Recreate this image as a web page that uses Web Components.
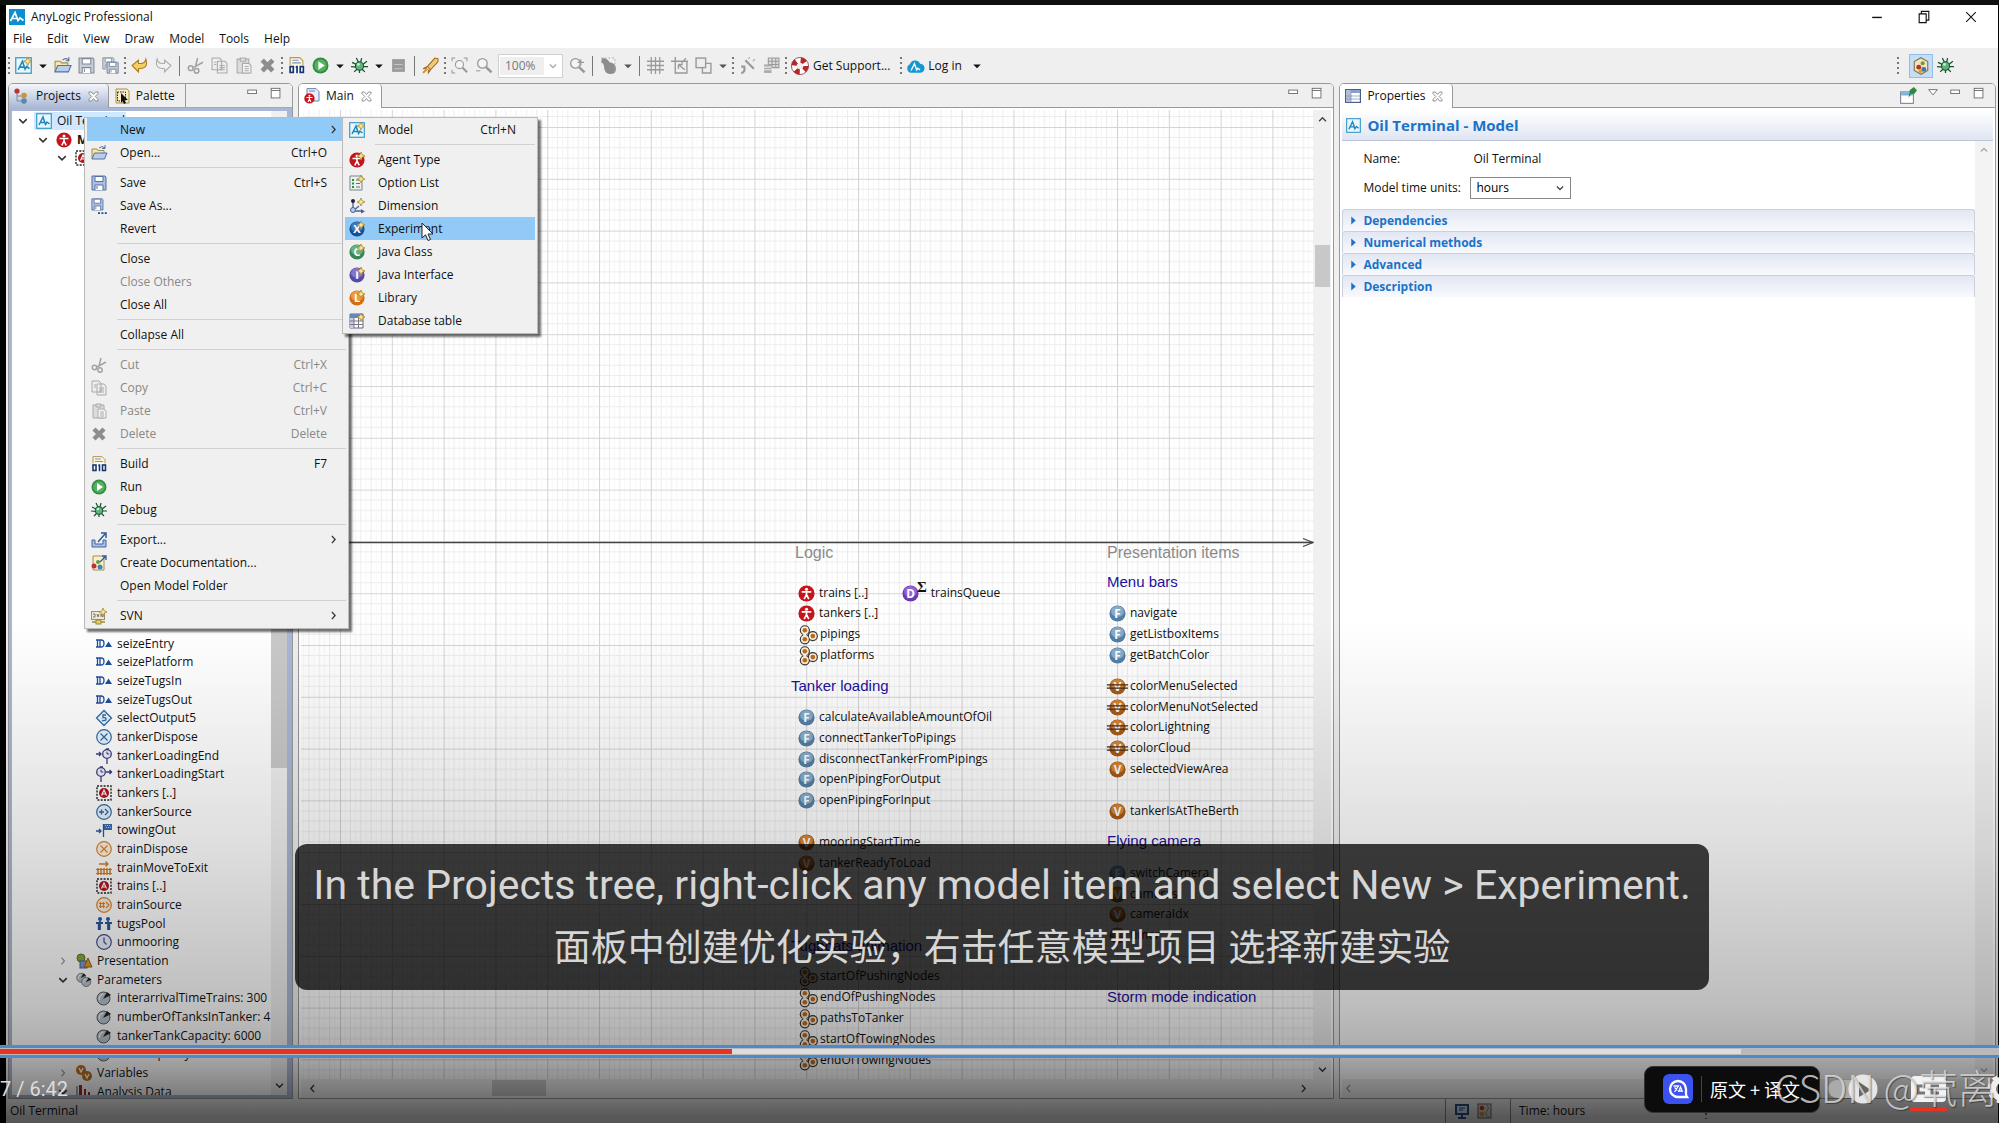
<!DOCTYPE html>
<html lang="en">
<head>
<meta charset="utf-8">
<title>AnyLogic Professional</title>
<style>
html,body{margin:0;height:100%;background:#0f0f0f;overflow:hidden}
body{font:12px/18px "Open Sans","Noto Sans",sans-serif;color:#111}
</style>
</head>
<body>
<video-player></video-player>
<script>
const ball=(a,b,t,x='')=>`<circle cx="8" cy="8" r="7.6" fill="${b}"/><ellipse cx="8" cy="6" rx="6" ry="5" fill="${a}"/><text x="8" y="12" text-anchor="middle" font-family="Open Sans" font-weight="700" font-size="11" fill="#fff">${t}</text>${x}`;
const star=`<path d="M12 0l1.2 2.8L16 4l-2.8 1.2L12 8l-1.200-2.800L8 4l2.800-1.200z" fill="#f8e69a" stroke="#a8862a" stroke-width=".8"/>`;
const logo=`<rect x=".7" y=".7" width="14.600" height="14.600" fill="#e9f6fc" stroke="#3a9bc9" stroke-width="1.200"/><path d="M3 12L7 4l2.500 7.500L11 9l2.500 2M4.500 9.500h4" fill="none" stroke="#1d87bd" stroke-width="1.500"/>`;
const man=`<circle cx="8" cy="8" r="7.600" fill="#c3151b"/><circle cx="8" cy="4" r="1.500" fill="#fff"/><path d="M3.500 6.500h9M8 6v4M8 9l-2.200 4.300M8 9l2.200 4.300" stroke="#fff" stroke-width="1.600" fill="none"/>`;
const bug=`<g stroke="#14532f" stroke-width="1.200" fill="none"><path d="M1 5l4 2M0 9l5 .5M3 14l3-3M5 1l2 4M10 1l-1 4M15 4l-4 3M16 9l-5 0M13 14l-3-3M8 15v-3"/></g><ellipse cx="8" cy="8.500" rx="3.800" ry="4" fill="#5fb27c" stroke="#14532f"/><circle cx="7" cy="7" r="1.300" fill="#c9efcf"/>`;
const floppy=(c,f)=>`<path d="M1 1h13l1 1v13H1z" fill="${f}" stroke="${c}"/><path d="M4 1.500h8v5H4z" fill="#fff" stroke="${c}"/><path d="M4 15v-5h8v5M6 11v3" fill="#fff" stroke="${c}"/>`;
const lens=`<circle cx="7" cy="6" r="4.500" fill="#f4f4f4" stroke="#999" stroke-width="1.200"/><path d="M10.500 9.500l5 5" stroke="#999" stroke-width="2.400"/>`;
const knob=`<circle cx="7.500" cy="8.500" r="6.500" fill="#b9c3cc" stroke="#555d66"/><path d="M3.500 10a5 5 0 0 1 4-6" stroke="#eef2f5" stroke-width="1.500" fill="none"/><path d="M7 9l4-7 4 3z" fill="#222"/>`;
const clock=(x,y,r)=>`<circle cx="${x}" cy="${y}" r="${r}" fill="#eef1fb" stroke="#3c3f80" stroke-width="1.300"/><path d="M${x} ${y-r+2}v${r-2}h${r-2}" stroke="#3c3f80" fill="none"/>`;
const nodes=`<g fill="#333"><circle cx="5.500" cy="4" r="4.800"/><circle cx="5.500" cy="12.500" r="4.800"/><circle cx="13" cy="9.500" r="4.800"/></g><g fill="#f8efdf"><circle cx="5.500" cy="4" r="3.700"/><circle cx="5.500" cy="12.500" r="3.700"/><circle cx="13" cy="9.500" r="3.700"/><path d="M4 6h3v5H4z"/></g><g fill="#c06a17"><circle cx="5.500" cy="4" r="2.200"/><circle cx="5.500" cy="12.500" r="2.200"/><circle cx="13" cy="9.500" r="2.200"/></g>`;
const seize=`<path d="M0 4h5M0 11h5M1.500 4v7M4 4v7M5 4q3 0 3 3.500T5 11" stroke="#1e4f9c" stroke-width="1.300" fill="none"/><path d="M9 11l3.500-5.500L16 11z" fill="#1e4f9c"/>`;
const agentRef=`<rect x="1" y="1" width="14" height="14" fill="#fff" stroke="#222" stroke-width="1.400" stroke-dasharray="2 1.300"/><circle cx="8" cy="8" r="5" fill="#b3131a"/><path d="M5.500 10.500L8 5l2.500 5.500M6.500 9h3" stroke="#fff" fill="none" stroke-width="1.200"/>`;
const I={
logo,
title:`<rect width="16" height="16" fill="#0d8fcf"/><path d="M1.500 12L6 3.500l3 8L11 9l3.500 2.500M3.500 9.500h5" fill="none" stroke="#fff" stroke-width="1.700"/>`,
newmodel:logo+star,
open:`<path d="M1 14V4h5l1 1.500h6V8" fill="#f7e7a8" stroke="#9a8a52"/><path d="M1 14l2.500-6H16l-2.500 6z" fill="#b9cdec" stroke="#54709f"/><path d="M8 3q3-3 6 0M14 0v3.500h-3" stroke="#54709f" fill="none"/>`,
save:floppy('#54709f','#a9c0e2'),
saveg:floppy('#7f8a99','#c9ced6'),
saveall:`<g transform="scale(.75)">${floppy('#7f8a99','#ced3da')}</g><g transform="translate(4 4) scale(.75)">${floppy('#6b7a94','#c3cad6')}</g>`,
saveas:`<g transform="scale(.8)">${floppy('#54709f','#a9c0e2')}</g><path d="M7 15.200h9" stroke="#234a8f" stroke-width="1.800" stroke-dasharray="2 1.400"/>`,
undo:`<path d="M1 8l6-5v3q6 1 7-4 3 9-7 9v3z" fill="#f6cf62" stroke="#a9791c"/>`,
redo:`<path d="M15 8L9 3v3Q3 7 2 2q-3 9 7 9v3z" fill="#f0f0f0" stroke="#aaa"/>`,
cut:`<g fill="none" stroke="#a3a3a3" stroke-width="1.500"><path d="M10 1L8 9M15 5L6 10"/><circle cx="3.500" cy="10.500" r="2.200"/><circle cx="9" cy="13" r="2.200"/></g>`,
copy:`<g fill="#eee" stroke="#aaa"><path d="M1 1h7l2 2v9H1zM6 4h7l2 2v9H6z"/><path d="M8 8h5M8 10h5M8 12h5M3 5h2M3 7h2"/></g>`,
paste:`<g fill="#ddd" stroke="#aaa"><path d="M2 2h11v13H2z"/><path d="M5 1h5v3H5z"/><path d="M7 6h6l2 2v7H7z" fill="#f3f3f3"/><path d="M9 9h4M9 11h4M9 13h4"/></g>`,
del:`<path d="M3 3l10 10M13 3l-10 10" stroke="#8d8d8d" stroke-width="4.400"/>`,
build:`<path d="M2 .600h9l3 3V14H2z" fill="#fbf6e2" stroke="#b59a4a"/><path d="M4 3h6M4 5.500h8" stroke="#7d93bd"/><rect x="1" y="7.500" width="15" height="8" fill="#fff"/><g fill="none" stroke="#16356e" stroke-width="1.600"><rect x="2" y="9" width="3" height="5.500"/><path d="M8.500 8.200v7M7.200 9.500h1.500"/><rect x="11.500" y="9" width="3" height="5.500"/></g>`,
run:`<circle cx="8" cy="8" r="7.500" fill="#2f8f3e"/><circle cx="8" cy="8" r="5.800" fill="#57b062"/><path d="M6 4l6 4-6 4z" fill="#fff"/>`,
bug,
stop:`<rect x="2" y="2" width="12" height="12" fill="#9a9a9a"/><path d="M4 7h8M4 11h8" stroke="#c5c5c5"/>`,
rocket:`<path d="M5 9l7-8 3 .500v3L8 12z" fill="#f3c877" stroke="#a06a20"/><path d="M5 9L1 11l3-.500M8 12l-2 3 0-3" stroke="#a06a20" fill="#c88"/><path d="M1 15l4-4" stroke="#d98a20" stroke-width="1.800"/>`,
zoomfit:`<g transform="translate(2 2) scale(.85)">${lens}</g><path d="M1 4V1h3M12 1h3v3M1 12v3h3" stroke="#999" fill="none"/>`,
zoomout:lens+`<path d="M1 13h4" stroke="#999"/>`,zoomin:lens+`<path d="M12 2v6M9 5h6" stroke="#999" stroke-width="1.200"/>`,
pear:`<path d="M2 1q5 0 7 4 6 1 6 6t-5 5-6-5Q4 6 1 5z" fill="#8d8d8d"/><path d="M1 1h13v13" fill="none" stroke="#aaa" stroke-dasharray="1.500 2"/>`,
grid:`<path d="M4 0v16M8 0v16M12 0v16M0 4h16M0 8h16M0 12h16" stroke="#9a9a9a" stroke-width="1.200"/>`,
snap:`<path d="M4 0v16M0 4h16M4 15h11V4M7 7l6 5M7 7v4M7 7h4M14 1l-4 5" stroke="#999" fill="none" stroke-width="1.300"/>`,
order:`<rect x="1" y="1" width="9" height="9" fill="#eee" stroke="#999" stroke-width="1.300"/><path d="M10 6h5v9H7v-5" fill="none" stroke="#999" stroke-width="1.300"/>`,
wand:`<path d="M6 3l8 8M2 15q4 0 3-6h-3" stroke="#999" stroke-width="2" fill="none"/><path d="M9 2l1-2M13 4l2-2" stroke="#aaa"/>`,
dbt:`<path d="M5 1h10v9H5z" fill="#ddd" stroke="#999"/><path d="M5 4h10M5 7h10M8.500 1v9M12 1v9" stroke="#999"/><path d="M1 7h7v8H1z" fill="#aaa"/><path d="M1 9.500h7M1 12h7" stroke="#eee"/>`,
buoy:`<circle cx="8" cy="8" r="5.300" fill="none" stroke="#fff" stroke-width="4.600"/><circle cx="8" cy="8" r="5.300" fill="none" stroke="#b8262b" stroke-width="4.600" stroke-dasharray="4.160 4.160"/><circle cx="8" cy="8" r="7.600" fill="none" stroke="#8c3034" stroke-width=".7"/>`,
cloud:`<path d="M4 14a4 4 0 0 1-.5-7.500A4.800 4.800 0 0 1 12.500 6 4 4 0 0 1 12.500 14z" fill="#1696d2"/><path d="M4.500 12l3-6 2 5.500 1-1.500 2 1.500" fill="none" stroke="#fff" stroke-width="1.200"/>`,
persp:`<path d="M8 .600l6 3.500v7.800l-6 3.500-6-3.500V4.100z" fill="#f1e3bd" stroke="#86744a"/><circle cx="6" cy="9" r="2.200" fill="#b93226"/><circle cx="10.500" cy="11" r="2.200" fill="#3877b5"/><circle cx="9.500" cy="5.500" r="1.800" fill="#679d3e"/><circle cx="7.500" cy="12.500" r="1.700" fill="#e79a2c"/>`,
projects:`<path d="M3 4v9h5M3 8h5" stroke="#888" fill="none"/><circle cx="3" cy="3" r="2.600" fill="#c22f2f"/><circle cx="10" cy="7.500" r="2.800" fill="#cf9235"/><circle cx="10" cy="13" r="2.800" fill="#5688b3"/>`,
palette:`<path d="M2 1h11l2 2v12H2z" fill="#f8edc9" stroke="#a6904d"/><path d="M3.500 4h8v9h-8z" fill="none" stroke="#222" stroke-dasharray="1.500 1"/><path d="M7 5l7 7h-3.500l1.500 3-2 1-1.500-3L7 15z" fill="#111"/>`,
mainfile:`<path d="M3 .600h9l3 3V13H3z" fill="#e9eefb" stroke="#6c82ae"/><path d="M5 3h6" stroke="#6c82ae"/><g transform="translate(0 5) scale(.68)">${man}</g>`,
props:`<rect x=".6" y="1.600" width="14.800" height="12.800" fill="#fff" stroke="#4d5f86" stroke-width="1.200"/><path d="M1 2h14v3H1z" fill="#8ba0cb"/><path d="M1 2h5v12H1z" fill="#b3bedd"/><path d="M1 8h14M1 11h14M6 2v12" stroke="#8794b5" stroke-width=".8"/>`,
pin:`<rect x=".6" y="4.600" width="12" height="10.800" fill="#fff" stroke="#768295"/><path d="M1 5h12v3H1z" fill="#78b6e0"/><path d="M9 3l4-3 3 3-3 4-2-1-3 4 1-5z" fill="#2f8a3b"/>`,
man,agentnew:man+star,agentref:agentRef,
optlist:`<path d="M1 1h12v14H1z" fill="#eaf2ec" stroke="#74858f"/><path d="M3 5h2M3 8.500h2M3 12h2" stroke="#2c8d3c" stroke-width="2"/><path d="M7 5h4M7 8.500h4M7 12h4" stroke="#768"/>`+star,
dimension:`<path d="M4 4v9h9M4 13l6-5" stroke="#49618f" stroke-width="1.300" fill="none"/><circle cx="4" cy="3" r="2" fill="#223"/><circle cx="4" cy="12" r="2.500" fill="#b6cbee" stroke="#49618f"/><path d="M12 11l4 2.500-4 2z" fill="#49618f"/>`+star,
exper:ball('#3a79c0','#164f93','X',star),jclass:ball('#6cb183','#3b8656','C',star),jint:ball('#8474c9','#574aa3','I',star),lib:ball('#f29a3d','#d46d10','L',star),
dbtable:`<path d="M1 1h13v14H1z" fill="#fff" stroke="#667"/><path d="M1 1h13v4H1z" fill="#6a86b8"/><path d="M1 5h4v10H1z" fill="#c4cde4"/><path d="M1 8h13M1 11.500h13M5 5v10M9.500 5v10" stroke="#778"/>`+star,
export:`<path d="M1 8v7h14V8h-3v4H4V8z" fill="#a9c0e6" stroke="#44639b"/><path d="M7 10l7-8M10 1h5v5" fill="none" stroke="#2d5c94" stroke-width="1.500"/>`,
doc:`<path d="M2 1h9l2 2v12H2z" fill="#f9efc9" stroke="#a6904d"/><circle cx="3" cy="11" r="2.500" fill="#c22f2f"/><circle cx="7" cy="7" r="2" fill="#5a9e4a"/><circle cx="9" cy="12" r="2.500" fill="#4a80b8"/><path d="M9 7l6-6M11 1h4v4" fill="none" stroke="#2d5c94" stroke-width="1.300"/>`,
svn:`<rect x=".5" y="3.500" width="13" height="8" fill="#efe9cf" stroke="#99906c"/><path d="M2 6h2v3H2M6 6l1 3 1-3M10 9V6l2 3V6" stroke="#777" fill="none"/><path d="M7 11v2M1 14h13" stroke="#998a3a" stroke-width="1.500"/><rect x="5" y="12" width="5" height="4" fill="#e9cf62" stroke="#998a3a"/>`+star,
seize,select5:`<path d="M8 .500L15.500 8 8 15.500.500 8z" fill="#eaf3fb" stroke="#2d6ca5" stroke-width="1.300"/><path d="M10 5H7v2.700q3.500-.500 3 1.800Q9.500 11 6 10.500" fill="none" stroke="#2d6ca5" stroke-width="1.300"/>`,
dispose:`<circle cx="8" cy="8" r="7.300" fill="#eaf3fb" stroke="#2d6ca5" stroke-width="1.200"/><path d="M4.500 4.500l7 7M11.500 4.500l-7 7" stroke="#2d6ca5" stroke-width="1.200"/>`,
disposeo:`<circle cx="8" cy="8" r="7.300" fill="#fbf1e2" stroke="#d9862a" stroke-width="1.200"/><path d="M4.500 4.500l7 7M11.500 4.500l-7 7" stroke="#d9862a" stroke-width="1.200"/>`,
tme:`<path d="M0 6h5M3 4l2 2-2 2M11 11v5M10 1h3" stroke="#3c3f80" stroke-width="1.300" fill="none"/>`+clock(11,6,4.3),
tms:`<path d="M10 6h6M13.500 4l2 2-2 2M5 11v5M4 1h3" stroke="#3c3f80" stroke-width="1.300" fill="none"/>`+clock(5,6,4.3),
source:`<circle cx="8" cy="8" r="7.300" fill="#eaf3fb" stroke="#2d6ca5" stroke-width="1.200"/><path d="M3 8h5M5.500 5.500v5M9 5l3 3-3 3" stroke="#2d6ca5" stroke-width="1.400" fill="none"/>`,
sourceo:`<circle cx="8" cy="8" r="7.300" fill="#fbf1e2" stroke="#d9862a" stroke-width="1.200"/><path d="M3 6.500h6M3 9.500h6M4.500 5v6M7.500 5v6M10 5l3 3-3 3" stroke="#d9862a" stroke-width="1.200" fill="none"/>`,
tow:`<path d="M0 9h5M3 7l2 2-2 2M7.500 2v13" stroke="#2e5796" stroke-width="1.300" fill="none"/><rect x="8" y="2" width="8" height="6" fill="#3a6cb1"/><path d="M9 3.500h6M10 5.500h6" stroke="#bcd" stroke-dasharray="1 1"/>`,
rail:`<path d="M0 9.500h16M0 13.500h16" stroke="#cf7f25" stroke-width="1.200"/><path d="M2 8v7M5 8v7M8 8v7M11 8v7M14 8v7" stroke="#cf7f25" stroke-width="1.500"/><path d="M3 4h9M9.500 1.500L12 4 9.500 6.500" stroke="#cf7f25" fill="none" stroke-width="1.300"/>`,
pool:`<g stroke="#2b57a0" stroke-width="1.800" fill="none"><path d="M0 7h7M4 5v9M9 7h7M12 5v9M2.700 8v6M13.300 8v6"/></g><circle cx="4" cy="3" r="2" fill="#2b57a0"/><circle cx="12" cy="3" r="2" fill="#2b57a0"/>`,
clock:`<circle cx="8" cy="8" r="7.300" fill="#eef1fb" stroke="#3c4f8a" stroke-width="1.200"/><path d="M8 3.500V8l2.500 2.500" stroke="#3c4f8a" stroke-width="1.200" fill="none"/>`,
pres:`<circle cx="5" cy="5" r="4" fill="#8aa83a" stroke="#5b7420"/><rect x="4" y="8" width="7" height="7" fill="#7b9bd0" stroke="#47628f"/><path d="M8 14l4-9 4 9z" fill="#e09a2b" stroke="#96600f"/>`,
params:`<g transform="scale(.68)">${knob}</g><g transform="translate(5 4) scale(.7)">${knob}</g>`,knob,
vars:`<circle cx="5" cy="5" r="5" fill="#bf6f1e"/><circle cx="11" cy="11" r="5" fill="#bf6f1e"/><path d="M3 3l2 4 2-4M9 9l2 4 2-4" stroke="#fff" stroke-width="1.300" fill="none"/>`,
chart:`<path d="M1 2v13M15 15H1" stroke="#555"/><path d="M3 1h3v13H3zM8 5h2v9H8zM12 8h2v6h-2z" fill="#a3262b"/>`,
F:ball('#86abc9','#547fa5','F'),V:ball('#d58535','#a95a16','V'),
VC:ball('#d58535','#a95a16','V')+`<path d="M-2 6.500h20M-2 9.500h20" stroke="#3c2c20" stroke-width="1.300"/>`,
D:ball('#9561d6','#6c3bb0','D'),nodes,
monitor:`<rect x="1" y="1" width="14" height="11" fill="#27528c"/><rect x="3" y="3" width="10" height="7" fill="#d8e6f5"/><path d="M5 5h6M5 7h4" stroke="#27528c"/><path d="M4 15h8M8 12v3" stroke="#27528c" stroke-width="2"/>`,
cards:`<rect x="1" y="1" width="13" height="14" fill="#d9d2c6" stroke="#666"/><circle cx="5" cy="5" r="2.300" fill="#c22f2f"/><circle cx="5" cy="11" r="2.300" fill="#d79b2d"/><path d="M10 2q3 3 0 6t2 6" stroke="#888" fill="none"/>`,
min:`<rect x="2" y="3.500" width="10" height="4" fill="#fff" stroke="#666"/>`,
max:`<rect x="2.500" y="1.500" width="10" height="11" fill="#fff" stroke="#666"/><path d="M2.500 4h10" stroke="#666"/>`,
view:`<path d="M3 3h10l-5 6z" fill="#fff" stroke="#666"/>`,
close:`<path d="M2.500 2.500h3L8 5.500l2.500-3h3v2L10 8l3.500 3.500v2h-3L8 10.500l-2.500 3h-3v-2L6 8 2.500 4.500z" fill="#fff" stroke="#777"/>`,
caret:`<path d="M3 6h10l-5 5z" fill="currentColor"/>`,
down:`<path d="M3 5.500l5 5 5-5" fill="none" stroke="currentColor" stroke-width="2"/>`,
up:`<path d="M3 10.500l5-5 5 5" fill="none" stroke="currentColor" stroke-width="2"/>`,
right:`<path d="M6 3.500l4 4.500-4 4.500" fill="none" stroke="currentColor" stroke-width="1.600"/>`,
left:`<path d="M10 3.500L6 8l4 4.500" fill="none" stroke="currentColor" stroke-width="1.600"/>`,
solid:`<path d="M4 1l8 7-8 7z" fill="currentColor"/>`,
wmin:`<path d="M2.500 8.500h11" stroke="#111" stroke-width="1.600"/>`,
wmax:`<path d="M2.500 4.500h8v10h-8zM5 4V1.500h8.500v10H11" fill="none" stroke="#111" stroke-width="1.300"/>`,
wclose:`<path d="M2.500 2.500l11 11M13.500 2.500l-11 11" stroke="#111" stroke-width="1.200"/>`
};
const ic=(n,s=16,c='')=>`<al-icon name="${n}" style="--s:${s}px${c?';color:'+c:''}"></al-icon>`;
const def=(tag,css,html)=>customElements.define(tag,class extends HTMLElement{
  constructor(){super();this.attachShadow({mode:'open'})}
  connectedCallback(){this.shadowRoot.innerHTML=`<style>*{box-sizing:border-box}button{font:inherit;color:inherit;border:0;background:none;padding:0;margin:0}${css}</style>`+(typeof html==='function'?html(this):html)}
});
def('al-icon',':host{display:inline-block;width:var(--s,16px);height:var(--s,16px);flex:none}svg{display:block;width:100%;height:100%;overflow:visible}',
  e=>`<svg viewBox="0 0 16 16" aria-hidden="true">${I[e.getAttribute('name')]}</svg>`);

def('al-titlebar',`:host{display:flex;align-items:center;height:24px;background:#fff;padding:0 20px 0 3px;gap:6px}.w{margin-left:auto;display:flex;gap:33px;align-items:center}.w button{display:flex}`,
  `${ic('title')}<span>AnyLogic Professional</span><span class="w"><button aria-label="Minimize">${ic('wmin',14)}</button><button aria-label="Restore">${ic('wmax',14)}</button><button aria-label="Close">${ic('wclose',14)}</button></span>`);
def('al-menubar',`:host{display:flex;height:19px;background:#fff;padding-left:7px;gap:15px}`,
  ['File','Edit','View','Draw','Model','Tools','Help'].map(t=>`<button>${t}</button>`).join(''));

const tb=t=>t.split(' ').map(n=>n==='|'?'<i class="sep"></i>':n===':'?'<i class="dots"></i>':n==='v'?`<button class="car" aria-label="More">${ic('caret',12)}</button>`:n==='vg'?`<button class="car g" aria-label="More">${ic('caret',12)}</button>`:`<button class="ib" aria-label="${n}">${ic(n,17)}</button>`).join('');
def('al-toolbar',`:host{display:flex;align-items:center;height:35px;background:#efefef;color:#111}
.ib{width:24px;height:24px;display:grid;place-items:center;flex:none}.car{width:15px;display:grid;place-items:center;flex:none}.g{color:#555}
.sep{width:8px;height:20px;flex:none;background:linear-gradient(#777,#777) center/1px 100% no-repeat}
.dots{width:5px;height:18px;flex:none;background:repeating-linear-gradient(#777 0 2px,transparent 2px 5px) center/2px 100% no-repeat}
.combo{display:grid;align-items:center;width:65px;height:24px;margin:0 1px 0 3px;background:#fff;border:1px solid #d0d0d0}
.combo>*{grid-area:1/1}.combo al-icon{justify-self:end;margin-right:4px}select{appearance:none;border:0;background:#efefef;font:inherit;color:#777;height:18px;width:44px;padding:0 5px;margin-left:1px}
.t{display:flex;align-items:center;gap:4px;margin:0 8px 0 3px}.r{margin-left:auto;display:flex;align-items:center;padding-right:41px}.r .on{background:#c5def6;border:1px solid #8fbfe8;margin-left:9px}`,
  tb(': newmodel v open saveg saveall : undo redo | cut copy paste del : build run v bug v stop | rocket : zoomfit zoomout')+
  `<label class="combo"><select aria-label="Zoom"><option>100%</option></select>${ic('down',10,'#aaa')}</label>`+
  tb('zoomin | pear vg | grid snap order vg : wand dbt :')+
  `<button class="t">${ic('buoy',18)}<span>Get Support...</span></button>${tb(':')}<button class="t">${ic('cloud',18)}<span>Log in</span></button>${tb('v')}
  <span class="r">${tb(':')}<button class="ib on" aria-label="Model perspective">${ic('persp',18)}</button>${tb('bug')}</span>`);

def('al-tab',`:host{display:flex;align-items:center;gap:4px;padding:0 8px 0 5px;height:23px;border-right:1px solid #999;color:#111}:host([on]){background:#fff;border-radius:4px 4px 0 0;height:24px}:host([active]){background:linear-gradient(#f4f6fb,#a9b7d4)}span{margin:0 2px}`,
  e=>`${ic(e.getAttribute('icon'),16)}<span><slot></slot></span>${e.hasAttribute('on')?ic('close',13):''}`);
def('al-panel',`:host{display:flex;flex-direction:column;border:1px solid #999;border-radius:5px 5px 0 0;background:#fff;min-width:0;min-height:0;overflow:hidden}
header{display:flex;height:24px;flex:none;background:linear-gradient(#999,#999) bottom/100% 1px no-repeat #efefef}.tools{margin-left:auto;display:flex;gap:9px;padding:3px 9px 0 0}.tools button{display:flex}
.body{flex:1;min-height:0;display:flex;flex-direction:column;padding:2px 2px 0}:host([active]) header{background:linear-gradient(#9aa9c9,#9aa9c9) bottom/100% 1px no-repeat #efefef}:host([active]) .body{padding:3px 5px 3px 3px;background:#a9b7d4}`,
  e=>`<header><slot name="tab"></slot><span class="tools">${(e.getAttribute('tools')||'min max').split(' ').map(n=>`<button aria-label="${n}">${ic(n,n==='pin'?17:14)}</button>`).join('')}</span></header><div class="body"><slot></slot></div>`);

const leaf=[['seize','seizeEntry'],['seize','seizePlatform'],['seize','seizeTugsIn'],['seize','seizeTugsOut'],['select5','selectOutput5'],['dispose','tankerDispose'],['tme','tankerLoadingEnd'],['tms','tankerLoadingStart'],['agentref','tankers [..]'],['source','tankerSource'],['tow','towingOut'],['disposeo','trainDispose'],['rail','trainMoveToExit'],['agentref','trains [..]'],['sourceo','trainSource'],['pool','tugsPool'],['clock','unmooring']];
const row=(d,ch,icon,t,c='')=>`<li class="${c}" style="padding-left:${d}px">${ch?ic(ch,12,ch==='down'?'#333':'#999'):'<b></b>'}<span class="n">${ic(icon,16)}${t?`<span>${t}</span>`:''}</span></li>`;
def('al-tree',`:host{display:flex;flex:1;min-height:0;background:#fff;overflow:hidden}ul{list-style:none;margin:0;padding:0;flex:1;min-width:0;overflow:hidden}
li{display:flex;align-items:center;height:19px;white-space:nowrap;line-height:18px}li:nth-child(3n){height:18px}li b{width:12px;flex:none}.n{display:flex;align-items:center;gap:5px;margin-left:5px;padding:0 2px}.sel .n{background:#cde8ff;width:92px}.bold{font-weight:700}
.bar{width:16px;display:flex;flex-direction:column;align-items:center;justify-content:space-between;padding:4px 0;flex:none;background:linear-gradient(#c9c9c9,#c9c9c9) 0 260px/100% 397px no-repeat #f0f0f0}`,
  `<ul>${row(5,'down','logo','Oil Terminal','sel')}${row(25,'down','man','Main','bold')}${row(44,'down','agentref','')}${'<li aria-hidden="true"></li>'.repeat(25)}${leaf.map(l=>row(65,'',l[0],l[1])).join('')}${row(45,'right','pres','Presentation')}${row(45,'down','params','Parameters')}${['interarrivalTimeTrains: 300','numberOfTanksInTanker: 4','tankerTankCapacity: 6000','trainCapacity: 600'].map(t=>row(65,'','knob',t)).join('')}${row(45,'right','vars','Variables')}${row(45,'down','chart','Analysis Data')}</ul><div class="bar">${ic('up',10,'#555')}${ic('down',11,'#333')}</div>`);

const C=[[806,593,'man','trains [..]'],[806,613,'man','tankers [..]'],[807,634,'nodes','pipings'],[807,655,'nodes','platforms'],
[806,717,'F','calculateAvailableAmountOfOil'],[806,738,'F','connectTankerToPipings'],[806,759,'F','disconnectTankerFromPipings'],[806,779,'F','openPipingForOutput'],[806,800,'F','openPipingForInput'],
[806,842,'V','mooringStartTime'],[806,863,'V','tankerReadyToLoad'],
[807,976,'nodes','startOfPushingNodes'],[807,997,'nodes','endOfPushingNodes'],[807,1018,'nodes','pathsToTanker'],[807,1039,'nodes','startOfTowingNodes'],[807,1060,'nodes','endOfTowingNodes'],
[1117,613,'F','navigate'],[1117,634,'F','getListboxItems'],[1117,655,'F','getBatchColor'],
[1117,686,'VC','colorMenuSelected'],[1117,707,'VC','colorMenuNotSelected'],[1117,727,'VC','colorLightning'],[1117,748,'VC','colorCloud'],[1117,769,'V','selectedViewArea'],[1117,811,'V','tankerIsAtTheBerth'],
[1117,873,'F','switchCamera'],[1117,894,'V','cameras'],[1117,914,'V','cameraIdx'],[1117,935,'V','timer']];
const H=[[791,686,'Tanker loading'],[791,946,'Tugboats animation'],[1107,582,'Menu bars'],[1107,841,'Flying camera'],[1107,997,'Storm mode indication']];
const OX=301,OY=110;
def('al-canvas',`:host{flex:1;min-height:0;display:grid;grid-template:minmax(0,1fr) 19px/minmax(0,1fr) 17px}
.c{position:relative;overflow:hidden;background:#fff}.bg{position:absolute;width:100%;height:100%;display:block}
.i,.h{position:absolute;white-space:nowrap;display:flex;align-items:center;gap:4px;height:18px}.h{font:15px/18px "Liberation Sans",Arial,sans-serif;color:#1c109c}.h.big{font-size:16px;color:#8a8a8a}
.v,.z{background:linear-gradient(#c8c8c8,#c8c8c8) 1px 135px/15px 42px no-repeat #f0f0f0;display:flex;flex-direction:column;justify-content:space-between;align-items:center;padding:4px 0}
.z{flex-direction:row;padding:0 5px;grid-column:1/3;padding-right:21px;background:linear-gradient(#c8c8c8,#c8c8c8) 191px 1px/54px 16px no-repeat #f0f0f0}.sig{font:700 15px/15px "Liberation Serif",serif;color:#111;margin:-12px 0 0 -6px}`,
  `<div class="c"><svg class="bg" aria-hidden="true"><defs><pattern id="g" width="518" height="518" patternUnits="userSpaceOnUse" patternTransform="translate(39 17) scale(.1)"><path d="M104 0V518M207 0V518M311 0V518M414 0V518M0 104H518M0 207H518M0 311H518M0 414H518" stroke="#ececec" stroke-width="10"/><path d="M52 0V518M155 0V518M259 0V518M362 0V518M466 0V518" stroke="#f6f6f6" stroke-width="10"/><path d="M5 0V518M0 5H518" stroke="#d4d4d4" stroke-width="11"/></pattern></defs><rect width="100%" height="100%" fill="url(#g)"/><path d="M0 432.500h1012" stroke="#444" stroke-width="1.300"/><path d="M1002 428.500l10 4-10 4" stroke="#444" fill="none" stroke-width="1.300"/></svg>
  <span class="h big" style="left:${795-OX}px;top:${544-OY}px">Logic</span><span class="h big" style="left:${1107-OX}px;top:${544-OY}px">Presentation items</span>
  ${H.map(h=>`<span class="h" style="left:${h[0]-OX}px;top:${h[1]-9-OY}px">${h[2]}</span>`).join('')}
  ${C.map(c=>`<span class="i" style="left:${c[0]-8-OX}px;top:${c[1]-9-OY}px">${ic(c[2],17)}<span>${c[3]}</span></span>`).join('')}
  <span class="i" style="left:${902-OX}px;top:${593-9-OY}px">${ic('D',17)}<span class="sig">Σ</span><span>trainsQueue</span></span></div>
  <div class="v">${ic('up',11,'#444')}${ic('down',11,'#333')}</div><div class="z">${ic('left',13,'#333')}${ic('right',13,'#333')}</div>`);

def('al-properties',`:host{flex:1;min-height:0;display:flex;flex-direction:column}h1{display:flex;align-items:center;gap:6px;margin:0;font-size:15px;line-height:20px;color:#1a73c8;height:31px;padding:0 4px;background:linear-gradient(#fff,#dfe5f2);border-bottom:1px solid #bcc4d6}
.m{flex:1;display:grid;grid-template:minmax(0,1fr) 19px/minmax(0,1fr) 18px;min-height:0}.f{display:grid;grid-template-columns:107px 101px;row-gap:9px;align-items:center;padding:9px 0 10px 21px}
.sel{display:grid;align-items:center;border:1px solid #888;height:22px}.sel>*{grid-area:1/1}.sel al-icon{justify-self:end;margin-right:5px}select{appearance:none;border:0;background:none;font:inherit;padding:0 5px;height:20px}output{padding-left:3px}
.s{display:flex;align-items:center;gap:5px;width:100%;height:22px;padding-left:6px;font-weight:700;font-size:12px;color:#1a73c8;border:1px solid #c9d0de;border-width:1px 1px 0;border-radius:3px 3px 0 0;background:linear-gradient(#e2e7f3,#f8f9fd)}
.v{background:#f3f3f3;display:flex;flex-direction:column;justify-content:space-between;align-items:center;padding:4px 0;}.z{grid-column:1/3;background:#f0f0f0;display:flex;align-items:center}`,
  `<h1>${ic('logo',15)}Oil Terminal - Model</h1><div class="m"><div><div class="f"><span>Name:</span><output>Oil Terminal</output><label for="u">Model time units:</label><span class="sel"><select id="u"><option>hours</option></select>${ic('down',10,'#444')}</span></div>
  ${['Dependencies','Numerical methods','Advanced','Description'].map(t=>`<button class="s">${ic('solid',9)}${t}</button>`).join('')}</div><div class="v">${ic('up',10,'#aaa')}${ic('down',10,'#aaa')}</div><div class="z">${ic('left',13,'#999')}</div></div>`);

def('al-status',`:host{display:flex;align-items:center;height:24px;background:#f0f0f0;padding-left:4px}.r{margin-left:auto;width:553px;display:flex;align-items:center;height:100%;gap:8px}.i{display:flex;gap:7px;border:1px solid #888;border-width:0 1px;height:100%;align-items:center;padding:0 17px 0 8px}.d{width:2px;height:16px;margin-left:112px;background:repeating-linear-gradient(#666 0 2px,transparent 2px 5px)}`,
  `<span>Oil Terminal</span><span class="r"><span class="i">${ic('monitor')}${ic('cards')}</span><span>Time: hours</span><i class="d"></i></span>`);

def('al-menu-item',`:host{display:block}button{display:flex;width:100%;height:23px;align-items:center;text-align:left;padding:0 19px 0 4px}:host([on]) button{background:#91c9f7}:host([off]) button{color:#888}.i{width:29px;display:flex;flex:none}.k{margin-left:auto}.a{margin-right:-13px;display:flex}`,
  e=>`<button role="menuitem" ${e.hasAttribute('off')?'disabled':''}><span class="i">${e.getAttribute('icon')?ic(e.getAttribute('icon'),16):''}</span><slot></slot><span class="k${e.hasAttribute('sub')?' a':''}">${e.hasAttribute('sub')?ic('right',13,'#333'):e.getAttribute('key')||''}</span></button>`);
def('al-menu',`:host{display:flex;flex-direction:column;position:absolute;background:#f0f0f0;border:1px solid #bbb;padding:0 2px 1px;box-shadow:3px 3px 2px rgba(0,0,0,.55)}::slotted(hr){border:0;border-top:1px solid #d0d0d0;margin:3px 0 3px 30px;height:0}`,`<slot></slot>`);
const M=(l)=>l.map(m=>m===0?'<hr>':`<al-menu-item icon="${m[1]||''}" key="${m[2]||''}" ${m[3]||''}>${m[0]}</al-menu-item>`).join('');

def('al-workbench',`:host{display:flex;flex-direction:column;background:#efefef;flex:1;min-height:0;margin:5px 1px 0 6px}.w{flex:1;min-height:0;display:grid;grid-template-columns:285px minmax(0,1037fr) minmax(0,657fr);column-gap:5px;padding:0 2px}`,
  `<al-titlebar></al-titlebar><al-menubar></al-menubar><al-toolbar></al-toolbar><div class="w">
  <al-panel active><al-tab slot="tab" icon="projects" on active>Projects</al-tab><al-tab slot="tab" icon="palette">Palette</al-tab><al-tree></al-tree></al-panel>
  <al-panel><al-tab slot="tab" icon="mainfile" on>Main</al-tab><al-canvas></al-canvas></al-panel>
  <al-panel tools="pin view min max"><al-tab slot="tab" icon="props" on>Properties</al-tab><al-properties></al-properties></al-panel></div><al-status></al-status>`);

def('caption-box',`:host{position:absolute;left:295px;right:290px;bottom:133px;height:146px;border-radius:12px;background:rgba(0,0,0,.75);color:#d6d6d6;text-align:center;white-space:nowrap}p{margin:0;font:41px/60px Roboto,sans-serif;padding-top:11px}p+p{font:37px/60px "Noto Sans CJK SC",sans-serif;padding:0}`,
  `<p>In the Projects tree, right-click any model item and select New &gt; Experiment.</p><p lang="zh">面板中创建优化实验，右击任意模型项目 选择新建实验</p>`);
def('player-bar',`:host{position:absolute;left:0;right:0;bottom:0;height:78px;color:#ddd}.p{height:13px;border:solid #5089c9;border-width:3px 0;background:#b9b9b9;display:flex;align-items:center}.p i{height:5px}.a{width:732px;background:#ea3223}.b{width:1009px;background:#dcdcdc}
.row{display:flex;height:62px;align-items:center}.t{font:20px/24px Roboto,sans-serif}
.pill{margin-left:auto;margin-right:8px;display:flex;align-items:center;width:176px;height:47px;border-radius:9px;background:#0c0c0c;border:1px solid #333;padding-left:18px;gap:8px;color:#fff;font:18px/24px "Noto Sans CJK SC",sans-serif}.pill hr{width:1px;height:26px;border:0;background:#444;margin:0}
.sw{width:50px;height:30px;display:block;margin-right:32px}.cc{width:38px;height:36px;margin-right:39px;margin-top:10px}.gear{width:30px;height:30px;margin-right:-18px}`,
  `<div class="p"><i class="a"></i><i class="b"></i></div><div class="row"><span class="t">7 / 6:42</span><button class="pill"><svg width="30" height="30" viewBox="0 0 30 30"><rect width="30" height="30" rx="6" fill="#3b52ee"/><path d="M22 23h-7a8 8 0 1 1 8-8v5q0 1.500 1 3z" fill="none" stroke="#fff" stroke-width="2.300"/><path d="M10.500 12h5l-4 6M11.500 13.500l3 3M15.500 18l2-5 2 5M16 17h3" stroke="#fff" fill="none" stroke-width="1.300"/></svg><hr><span>原文 + 译文</span></button>
  <svg class="sw" viewBox="0 0 50 30"><rect x="0" y="6" width="40" height="18" rx="9" fill="#aaa"/><circle cx="35" cy="15" r="14.500" fill="#e6e6e6"/><path d="M31 8l12 8-12 7z" fill="#666"/></svg>
  <svg class="cc" viewBox="0 0 38 36"><rect x="1" y="0" width="35" height="26" rx="4" fill="#f2f2f2"/><path d="M15 10H8v7h7M29 10h-7v7h7" fill="none" stroke="#777" stroke-width="3"/><rect x="0" y="31" width="37" height="4" rx="1.500" fill="#ea3223"/></svg>
  <svg class="gear" viewBox="0 0 30 30"><circle cx="15" cy="15" r="9" fill="none" stroke="#eee" stroke-width="6"/><circle cx="15" cy="15" r="12.500" fill="none" stroke="#eee" stroke-width="4" stroke-dasharray="5 4.800"/></svg></div>`);

def('video-player',`:host{display:flex;height:100vh;position:relative;overflow:hidden;background:#000;border-top:0}
.top{position:absolute;left:0;right:0;height:5px;background:#0f0f0f}.shade{position:absolute;inset:620px 0 0 0;background:linear-gradient(transparent,rgba(0,0,0,.03) 12%,rgba(0,0,0,.13) 45%,rgba(0,0,0,.26) 77%,rgba(0,0,0,.33) 86%,rgba(0,0,0,.48) 93%,rgba(0,0,0,.64) 99%)}
.cur{position:absolute;left:421px;top:222px;width:13px;height:20px}.wm{position:absolute;right:2px;bottom:11px;font:39px/52px "Noto Sans CJK SC",sans-serif;font-weight:300;color:rgba(225,225,225,.8);text-shadow:1px 1px 1px rgba(0,0,0,.4);white-space:nowrap}`,
  `<al-workbench></al-workbench><div class="top"></div>
  <al-menu style="left:84px;top:117px;width:265px">${M([['New','','','on sub'],['Open...','open','Ctrl+O'],0,['Save','save','Ctrl+S'],['Save As...','saveas'],['Revert'],0,['Close'],['Close Others','','','off'],['Close All'],0,['Collapse All'],0,['Cut','cut','Ctrl+X','off'],['Copy','copy','Ctrl+C','off'],['Paste','paste','Ctrl+V','off'],['Delete','del','Delete','off'],0,['Build','build','F7'],['Run','run'],['Debug','bug'],0,['Export...','export','','sub'],['Create Documentation...','doc'],['Open Model Folder'],0,['SVN','svn','','sub']])}</al-menu>
  <al-menu style="left:342px;top:117px;width:196px">${M([['Model','newmodel','Ctrl+N'],0,['Agent Type','agentnew'],['Option List','optlist'],['Dimension','dimension'],['Experiment','exper','','on'],['Java Class','jclass'],['Java Interface','jint'],['Library','lib'],['Database table','dbtable']])}</al-menu>
  <svg class="cur" viewBox="0 0 13 20"><path d="M1 1v15l3.500-3.200L7 18.500l2.500-1L7 12h5z" fill="#fff" stroke="#222"/></svg>
  <div class="shade"></div><caption-box></caption-box><player-bar></player-bar><span class="wm">CSDN @茕离</span>`);
</script>
</body>
</html>
